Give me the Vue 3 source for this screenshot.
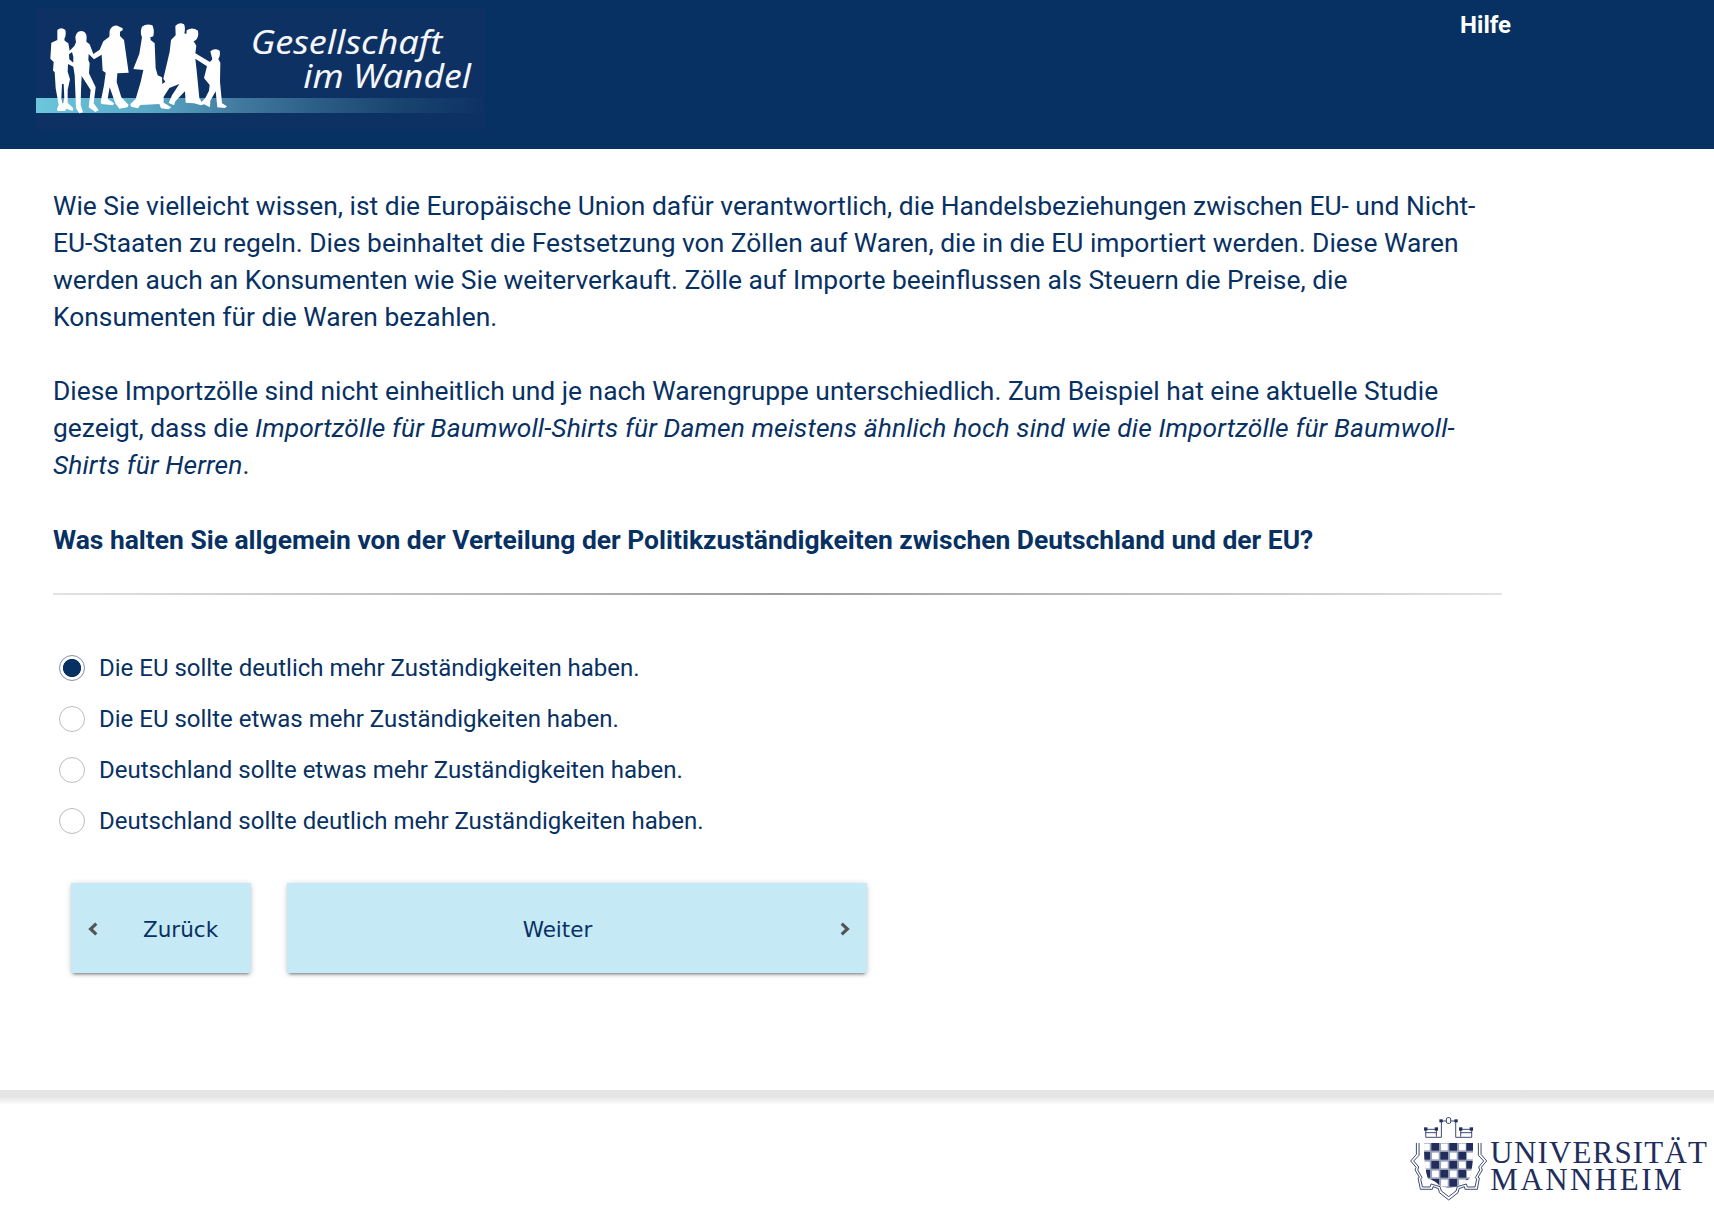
<script setup>
import { ref } from 'vue'

const options = [
  'Die EU sollte deutlich mehr Zuständigkeiten haben.',
  'Die EU sollte etwas mehr Zuständigkeiten haben.',
  'Deutschland sollte etwas mehr Zuständigkeiten haben.',
  'Deutschland sollte deutlich mehr Zuständigkeiten haben.'
]
const selected = ref(0)

// Shield checkerboard: 6 columns by 5 rows
const colX = [97, 124, 151, 178, 205, 229]
const rowY = [189, 216, 243, 270, 297]
const cells = rowY.flatMap((y, r) =>
  colX.map((x, c) => ({ x, y, dark: (r + c) % 2 === 1 }))
)
</script>

<template>
  <div class="page">
    <header class="top">
      <svg class="brand" viewBox="48 24 1347 363">
        <defs>
          <linearGradient id="band" x1="0" x2="1" y1="0" y2="0">
            <stop offset="0" stop-color="#6cc6dc" />
            <stop offset="0.25" stop-color="#5aa9c6" />
            <stop offset="0.45" stop-color="#427a9f" />
            <stop offset="0.62" stop-color="#2c5f88" />
            <stop offset="0.8" stop-color="#1a4570" />
            <stop offset="1" stop-color="#0e3164" />
          </linearGradient>
        </defs>
        <rect x="48" y="24" width="1347" height="363" fill="#0e3164" />
        <rect x="48" y="294" width="1347" height="45" fill="url(#band)" />
        <!-- walking group -->
        <g fill="#fff">
          <path d="M112 90Q124 80 136 90Q140 104 133 116L134 122L145 130L149 152L163 138L168 127L166 112Q168 94 184 93Q199 95 200 111L199 125L209 133L220 162L239 149L250 124L268 110L269 92Q276 75 292 77L308 85V91L300 95L300 108L312 120L326 218L292 220L290 246L304 292L326 315L322 322L298 326L286 310L269 262L263 296L282 310L279 316L244 312L242 305L252 256L257 218L248 212L245 164L222 178L206 162L205 180L209 190L207 220L227 262L221 310L236 331L226 336L206 322L212 270L185 228L183 270L182 315L189 337L178 340L168 325L164 226L160 200L144 192L143 215L150 238L143 270L143 308L160 325L158 333L138 326L136 333L113 333L111 327L116 314L107 265L104 216L99 212L101 186L91 176L94 128L112 120Z" />
          <path d="M366 112Q359 96 366 80Q380 69 397 76Q404 88 400 109L391 112L392 120L404 130L407 205L413 226L426 232L427 252L436 245L430 236L449 155L453 120L467 106L466 78Q477 65 492 73Q497 83 493 100L499 102L500 91Q517 79 534 92Q537 110 528 120L521 124L529 137L526 160L570 186L577 178L571 154Q584 143 599 152Q602 166 595 177L601 188L600 246L606 310L621 319L615 324L592 322L587 274L571 302L570 322L552 313L543 316L522 310L497 308L495 274L466 304L462 316L446 309L456 286L478 252L448 264L431 290L431 308L454 322L445 328L423 325L418 312L361 315L354 325L333 320L331 312L347 297L362 246L370 210L340 207L358 161Z" />
        </g>
        <!-- open gaps between figures -->
        <g fill="#0e3164">
          <path d="M147 163L156 156L160 170L160 188L148 178Z" />
          <path d="M126 252L131 252L133 295H124Z" />
          <path d="M526 176L561 199L552 234L569 255L567 272L556 294H538L530 212Z" />
        </g>
        <g fill="#4f98b6">
          <path d="M124 294H132L130 310L127 310Z" />
          <path d="M538 294H556L545 306Z" />
        </g>
        <g class="brand-text">
          <text x="692" y="162" textLength="575" lengthAdjust="spacingAndGlyphs">Gesellschaft</text>
          <text x="850" y="264" textLength="503" lengthAdjust="spacingAndGlyphs">im Wandel</text>
        </g>
      </svg>
      <a class="help">Hilfe</a>
    </header>

    <main>
      <section class="question">
        <p>
          Wie Sie vielleicht wissen, ist die Europäische Union dafür verantwortlich, die Handelsbeziehungen zwischen EU- und Nicht-<br />EU-Staaten zu regeln. Dies beinhaltet die Festsetzung von Zöllen auf Waren, die in die EU importiert werden. Diese Waren<br />werden auch an Konsumenten wie Sie weiterverkauft. Zölle auf Importe beeinflussen als Steuern die Preise, die<br />Konsumenten für die Waren bezahlen.
        </p>
        <p>
          Diese Importzölle sind nicht einheitlich und je nach Warengruppe unterschiedlich. Zum Beispiel hat eine aktuelle Studie<br />gezeigt, dass die <i>Importzölle für Baumwoll-Shirts für Damen meistens ähnlich hoch sind wie die Importzölle für Baumwoll-<br />Shirts für Herren</i>.
        </p>
        <p><b>Was halten Sie allgemein von der Verteilung der Politikzuständigkeiten zwischen Deutschland und der EU?</b></p>
      </section>
      <div class="rule"></div>
      <ul class="answers">
        <li v-for="(label, i) in options" :key="label" @click="selected = i">
          <span class="radio" :class="{ on: selected === i }"></span>
          <span>{{ label }}</span>
        </li>
      </ul>
      <div class="nav">
        <button class="back">
          <svg viewBox="0 0 12 16"><path d="M9.3 2.7L3.6 8l5.7 5.3" /></svg>
          <span>Zurück</span>
        </button>
        <button class="next">
          <span>Weiter</span>
          <svg viewBox="0 0 12 16"><path d="M2.7 2.7L8.4 8l-5.7 5.3" /></svg>
        </button>
      </div>
    </main>

    <footer>
      <svg class="uni" viewBox="60 105 912 265">
        <defs>
          <clipPath id="shield"><path d="M102 189H249V215Q249 262 238 297Q214 306 200 320L176 325L150 318Q135 300 114 297Q103 262 102 215Z" /></clipPath>
        </defs>
        <g clip-path="url(#shield)">
          <rect x="102" y="189" width="147" height="140" fill="#9aa0b8" />
          <template v-for="(c, i) in cells" :key="i">
            <rect v-if="c.dark" :x="c.x" :y="c.y" width="23" height="23" fill="#212e5c" />
            <rect v-else :x="c.x + 2" :y="c.y + 2" width="20" height="20" fill="#fff" />
          </template>
        </g>
        <g class="lines">
          <path d="M79 189V223L62 243L78 262L75 270L88 292L84 294L91 328H127L129 320L145 326L148 338L176 360L204 338L207 326L223 320L225 328H262L268 294L264 292L277 270L274 262L290 243L273 223V189" />
          <path d="M87 189V226L71 243L86 261L83 270L96 293L92 297L97 321H120L123 312L150 320L154 333L176 350L198 333L202 320L229 312L232 321H255L260 297L256 293L269 270L266 261L281 243L265 226V189" />
        </g>
        <g class="towers">
          <path d="M107 148V172H154V123H197V172H245V148M107 148H139V170M245 148H212V170M107 158H139M212 158H245" />
          <rect x="169" y="113" width="13" height="17" rx="4" fill="#fff" />
        </g>
        <g fill="#212e5c">
          <rect x="102" y="142" width="10" height="10" /><rect x="134" y="142" width="10" height="10" />
          <rect x="207" y="142" width="10" height="10" /><rect x="239" y="142" width="10" height="10" />
          <rect x="148" y="118" width="10" height="9" /><rect x="193" y="118" width="10" height="9" />
        </g>
        <g class="uni-text">
          <text x="301" y="249" textLength="650">UNIVERSITÄT</text>
          <text x="301" y="330" textLength="574">MANNHEIM</text>
        </g>
      </svg>
    </footer>
  </div>
</template>

<style>
body {
  margin: 0;
  background: #fff;
}
</style>

<style scoped>
.page {
  height: 1212px;
  display: flex;
  flex-direction: column;
  overflow: hidden;
  color: #083163;
  font-family: Roboto, sans-serif;
}
.top {
  height: 149px;
  box-sizing: border-box;
  flex: none;
  display: flex;
  align-items: flex-start;
  justify-content: space-between;
  padding: 8px 203px 0 36px;
  background: #083163;
}
.brand {
  width: 449px;
  height: 121px;
}
.brand-text {
  fill: #f4f6fa;
  font: italic 400 100px 'Noto Sans', sans-serif;
  font-variant-ligatures: none;
}
.help {
  margin-top: 2px;
  color: #fff;
  font-weight: 700;
  font-size: 24px;
  line-height: 30px;
}
main {
  flex: none;
  height: 941px;
  box-sizing: border-box;
  padding: 39px 0 0 53px;
}
.question p {
  margin: 0 0 37px;
  font-size: 26.38px;
  line-height: 37px;
  white-space: nowrap;
}
.question p:last-child {
  margin-bottom: 35px;
  font-size: 26.41px;
}
.question i {
  letter-spacing: 0.112px;
}
.rule {
  width: 1449px;
  height: 2px;
  background: linear-gradient(90deg, #e2e2e2, #9c9c9c 50%, #e2e2e2);
}
.answers {
  list-style: none;
  margin: 47.4px 0 0;
  padding: 0 0 0 6px;
  font-size: 24px;
}
.answers li {
  display: flex;
  align-items: center;
  gap: 14px;
  height: 50.9px;
}
.radio {
  width: 26px;
  height: 26px;
  box-sizing: border-box;
  border: 1px solid #bcbcbc;
  border-radius: 50%;
}
.radio.on {
  border-color: #8390a6;
  background: radial-gradient(circle, #083163 8.7px, transparent 9.4px);
}
.nav {
  display: flex;
  gap: 36px;
  margin: 37px 0 0 18px;
}
.nav button {
  display: flex;
  align-items: center;
  height: 90px;
  border: 0;
  padding: 0 16px;
  background: #c5e9f5;
  box-shadow: 0 3px 3px -2px rgba(0, 0, 0, 0.45), 0 1px 6px rgba(0, 0, 0, 0.2);
  color: #083163;
  font: 21.5px 'DejaVu Sans', sans-serif;
}
.nav span {
  padding-top: 3px;
}
.nav svg {
  width: 12px;
  height: 16px;
  margin-top: 2px;
  fill: none;
  stroke: #555;
  stroke-width: 3.2;
}
.back {
  width: 180px;
}
.back span {
  margin-left: 44px;
}
.next {
  width: 580px;
}
.next span {
  flex: 1;
  padding-right: 27px;
  text-align: center;
}
footer {
  flex: 1;
  display: flex;
  justify-content: flex-end;
  background: linear-gradient(#e4e4e4 0, #e6e6e6 7px, #fff 15px);
}
.uni {
  width: 304px;
  height: 88.3px;
  margin-top: 25px;
}
.lines,
.towers {
  fill: none;
  stroke: #212e5c;
  stroke-width: 2.6;
}
.uni-text {
  fill: #212e5c;
  font: 93px 'Liberation Serif', serif;
}
</style>
